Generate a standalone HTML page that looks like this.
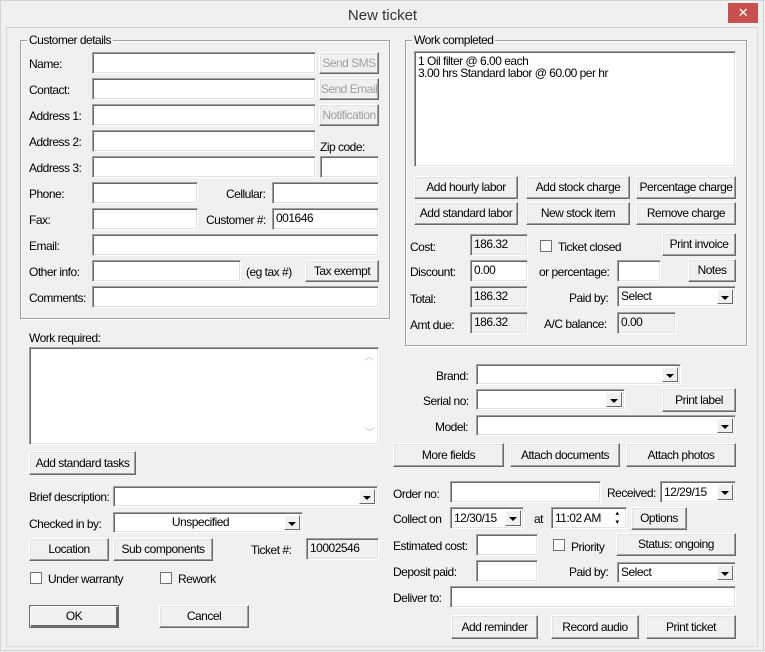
<!DOCTYPE html>
<html><head><meta charset="utf-8"><style>
*{box-sizing:border-box;margin:0;padding:0}
body{width:765px;height:652px;background:#f0f0f0;position:relative;overflow:hidden;font:12px "Liberation Sans",Arial,sans-serif;color:#000;letter-spacing:-0.5px}
.a{position:absolute;white-space:nowrap}
.win{position:absolute;left:0;top:0;width:764px;height:651px;border:1px solid #d4d4d4;background:#f0f0f0}
.client{position:absolute;left:6px;top:27px;width:752px;height:620px;border:1px solid #dcdcdc;border-top-color:#d0d0d0}
.t{position:absolute;background:#fff;border:1px solid;border-color:#a0a0a0 #fff #fff #a0a0a0;box-shadow:inset 1px 1px 0 #696969,inset -1px -1px 0 #e3e3e3;padding:2px 0 0 3px;line-height:14px;white-space:nowrap}
.ro{background:#f0f0f0}
.b{position:absolute;background:#f0f0f0;border:1px solid;border-color:#fff #696969 #696969 #fff;box-shadow:inset -1px -1px 0 #a0a0a0,inset 1px 1px 0 #e3e3e3;text-align:center;line-height:20px;white-space:nowrap}
.dis{color:#a0a0a0}
.g{position:absolute;border:1px solid #a0a0a0;box-shadow:1px 1px 0 #fff,inset 1px 1px 0 #fff}
.gl{position:absolute;top:-8px;left:6px;background:#f0f0f0;padding:0 2px}
.s{position:absolute;background:#fff;border:1px solid;border-color:#a0a0a0 #fff #fff #a0a0a0;box-shadow:inset 1px 1px 0 #696969,inset -1px -1px 0 #e3e3e3;padding:1px 0 0 3px;line-height:16px;white-space:nowrap}
.arr{position:absolute;right:2px;top:2px;bottom:2px;width:16px;background:#f0f0f0;border:1px solid;border-color:#fff #696969 #696969 #fff}
.arr:after{content:"";position:absolute;left:3px;top:6px;border-left:4px solid transparent;border-right:4px solid transparent;border-top:4px solid #000}
.cb{position:absolute;width:12px;height:12px;background:#fff;border:1px solid #707070}
</style></head><body>
<div class="win"></div>
<div class="a" style="left:0;top:7px;width:765px;text-align:center;font-size:15px;color:#333;letter-spacing:0">New ticket</div>
<div class="a" style="left:728px;top:3px;width:30px;height:20px;background:#c7504f;color:#fff;text-align:center;font-size:13px;line-height:20px">✕</div>
<div class="client"></div>

<div class="g" style="left:20px;top:40px;width:370px;height:279px"><span class="gl">Customer details</span></div>
<div class="a" style="left:29px;top:57px">Name:</div>
<div class="t" style="left:92px;top:52px;width:224px;height:22px"></div>
<div class="b dis" style="left:319px;top:52px;width:60px;height:22px">Send SMS</div>
<div class="a" style="left:29px;top:83px">Contact:</div>
<div class="t" style="left:92px;top:78px;width:224px;height:22px"></div>
<div class="b dis" style="left:319px;top:78px;width:60px;height:22px">Send Email</div>
<div class="a" style="left:29px;top:109px">Address 1:</div>
<div class="t" style="left:92px;top:104px;width:224px;height:22px"></div>
<div class="b dis" style="left:319px;top:104px;width:60px;height:22px">Notification</div>
<div class="a" style="left:29px;top:135px">Address 2:</div>
<div class="t" style="left:92px;top:130px;width:224px;height:22px"></div>
<div class="a" style="left:320px;top:140px">Zip code:</div>
<div class="a" style="left:29px;top:161px">Address 3:</div>
<div class="t" style="left:92px;top:156px;width:224px;height:22px"></div>
<div class="t" style="left:320px;top:156px;width:59px;height:22px"></div>
<div class="a" style="left:29px;top:187px">Phone:</div>
<div class="t" style="left:92px;top:182px;width:106px;height:22px"></div>
<div class="a" style="left:226px;top:187px">Cellular:</div>
<div class="t" style="left:272px;top:182px;width:107px;height:22px"></div>
<div class="a" style="left:29px;top:213px">Fax:</div>
<div class="t" style="left:92px;top:208px;width:106px;height:22px"></div>
<div class="a" style="left:206px;top:213px">Customer #:</div>
<div class="t" style="left:272px;top:208px;width:107px;height:22px">001646</div>
<div class="a" style="left:29px;top:239px">Email:</div>
<div class="t" style="left:92px;top:234px;width:287px;height:22px"></div>
<div class="a" style="left:29px;top:265px">Other info:</div>
<div class="t" style="left:92px;top:260px;width:149px;height:22px"></div>
<div class="a" style="left:246px;top:265px">(eg tax #)</div>
<div class="b" style="left:305px;top:260px;width:74px;height:22px">Tax exempt</div>
<div class="a" style="left:29px;top:291px">Comments:</div>
<div class="t" style="left:92px;top:286px;width:287px;height:22px"></div>

<div class="g" style="left:405px;top:40px;width:342px;height:306px"><span class="gl">Work completed</span></div>
<div class="t" style="left:414px;top:51px;width:322px;height:116px;line-height:12px;padding-top:3px">1 Oil filter @ 6.00 each<br>3.00 hrs Standard labor @ 60.00 per hr</div>
<div class="b" style="left:414px;top:176px;width:104px;height:23px">Add hourly labor</div>
<div class="b" style="left:526px;top:176px;width:104px;height:23px">Add stock charge</div>
<div class="b" style="left:636px;top:176px;width:100px;height:23px">Percentage charge</div>
<div class="b" style="left:414px;top:202px;width:104px;height:23px">Add standard labor</div>
<div class="b" style="left:526px;top:202px;width:104px;height:23px">New stock item</div>
<div class="b" style="left:636px;top:202px;width:100px;height:23px">Remove charge</div>
<div class="a" style="left:410px;top:240px">Cost:</div>
<div class="t ro" style="left:470px;top:234px;width:58px;height:22px">186.32</div>
<div class="cb" style="left:540px;top:240px"></div>
<div class="a" style="left:558px;top:240px">Ticket closed</div>
<div class="b" style="left:662px;top:233px;width:74px;height:23px">Print invoice</div>
<div class="a" style="left:410px;top:265px">Discount:</div>
<div class="t" style="left:470px;top:260px;width:58px;height:22px">0.00</div>
<div class="a" style="left:539px;top:265px">or percentage:</div>
<div class="t" style="left:617px;top:260px;width:44px;height:22px"></div>
<div class="b" style="left:688px;top:259px;width:48px;height:23px">Notes</div>
<div class="a" style="left:410px;top:292px">Total:</div>
<div class="t ro" style="left:470px;top:286px;width:58px;height:22px">186.32</div>
<div class="a" style="left:569px;top:291px">Paid by:</div>
<div class="s" style="left:617px;top:286px;width:119px;height:21px">Select<div class="arr"></div></div>
<div class="a" style="left:410px;top:318px">Amt due:</div>
<div class="t ro" style="left:470px;top:312px;width:58px;height:22px">186.32</div>
<div class="a" style="left:544px;top:317px">A/C balance:</div>
<div class="t ro" style="left:617px;top:312px;width:59px;height:22px">0.00</div>

<div class="a" style="left:29px;top:331px">Work required:</div>
<div class="t" style="left:29px;top:347px;width:350px;height:98px"><span class="a" style="right:4px;top:3px;color:#c0c0c0;font-size:10px">︿</span><span class="a" style="right:4px;bottom:3px;color:#c0c0c0;font-size:10px">﹀</span></div>
<div class="b" style="left:29px;top:451px;width:107px;height:24px;line-height:22px">Add standard tasks</div>
<div class="a" style="left:29px;top:490px">Brief description:</div>
<div class="s" style="left:113px;top:486px;width:265px;height:21px"><div class="arr"></div></div>
<div class="a" style="left:29px;top:517px">Checked in by:</div>
<div class="s" style="left:113px;top:512px;width:190px;height:21px;text-align:center;padding-right:18px">Unspecified<div class="arr"></div></div>
<div class="b" style="left:29px;top:538px;width:80px;height:23px">Location</div>
<div class="b" style="left:113px;top:538px;width:100px;height:23px">Sub components</div>
<div class="a" style="left:251px;top:543px">Ticket #:</div>
<div class="t ro" style="left:306px;top:538px;width:73px;height:22px">10002546</div>
<div class="cb" style="left:30px;top:572px"></div>
<div class="a" style="left:48px;top:572px">Under warranty</div>
<div class="cb" style="left:160px;top:572px"></div>
<div class="a" style="left:178px;top:572px">Rework</div>
<div class="b" style="left:29px;top:605px;width:90px;height:23px;border-color:#696969;box-shadow:inset 1px 1px 0 #fff,inset -2px -2px 0 #696969">OK</div>
<div class="b" style="left:159px;top:605px;width:90px;height:23px">Cancel</div>

<div class="a" style="left:436px;top:369px">Brand:</div>
<div class="s" style="left:476px;top:364px;width:205px;height:21px"><div class="arr"></div></div>
<div class="a" style="left:423px;top:394px">Serial no:</div>
<div class="s" style="left:476px;top:389px;width:149px;height:21px"><div class="arr"></div></div>
<div class="b" style="left:662px;top:388px;width:74px;height:24px;line-height:22px">Print label</div>
<div class="a" style="left:435px;top:420px">Model:</div>
<div class="s" style="left:476px;top:415px;width:260px;height:21px"><div class="arr"></div></div>
<div class="b" style="left:393px;top:443px;width:111px;height:24px;line-height:22px">More fields</div>
<div class="b" style="left:510px;top:443px;width:110px;height:24px;line-height:22px">Attach documents</div>
<div class="b" style="left:626px;top:443px;width:110px;height:24px;line-height:22px">Attach photos</div>
<div class="a" style="left:393px;top:487px">Order no:</div>
<div class="t" style="left:450px;top:481px;width:151px;height:22px"></div>
<div class="a" style="left:607px;top:486px">Received:</div>
<div class="s" style="left:660px;top:481px;width:76px;height:22px;padding-top:2px">12/29/15<div class="arr"></div></div>
<div class="a" style="left:393px;top:512px">Collect on</div>
<div class="s" style="left:450px;top:507px;width:74px;height:22px;padding-top:2px">12/30/15<div class="arr"></div></div>
<div class="a" style="left:534px;top:512px">at</div>
<div class="s" style="left:551px;top:507px;width:76px;height:22px;padding-top:2px">11:02 AM<span class="a" style="right:2px;top:1px;font-size:7px;line-height:9px;text-align:center;width:14px">▴<br>▾</span></div>
<div class="b" style="left:631px;top:507px;width:56px;height:23px">Options</div>
<div class="a" style="left:393px;top:539px">Estimated cost:</div>
<div class="t" style="left:476px;top:534px;width:62px;height:22px"></div>
<div class="cb" style="left:553px;top:539px"></div>
<div class="a" style="left:571px;top:540px">Priority</div>
<div class="b" style="left:616px;top:533px;width:120px;height:23px">Status: ongoing</div>
<div class="a" style="left:393px;top:565px">Deposit paid:</div>
<div class="t" style="left:476px;top:560px;width:62px;height:22px"></div>
<div class="a" style="left:569px;top:565px">Paid by:</div>
<div class="s" style="left:617px;top:562px;width:119px;height:21px">Select<div class="arr"></div></div>
<div class="a" style="left:393px;top:591px">Deliver to:</div>
<div class="t" style="left:450px;top:586px;width:286px;height:22px"></div>
<div class="b" style="left:451px;top:615px;width:87px;height:24px;line-height:22px">Add reminder</div>
<div class="b" style="left:551px;top:615px;width:88px;height:24px;line-height:22px">Record audio</div>
<div class="b" style="left:646px;top:615px;width:90px;height:24px;line-height:22px">Print ticket</div>
</body></html>
